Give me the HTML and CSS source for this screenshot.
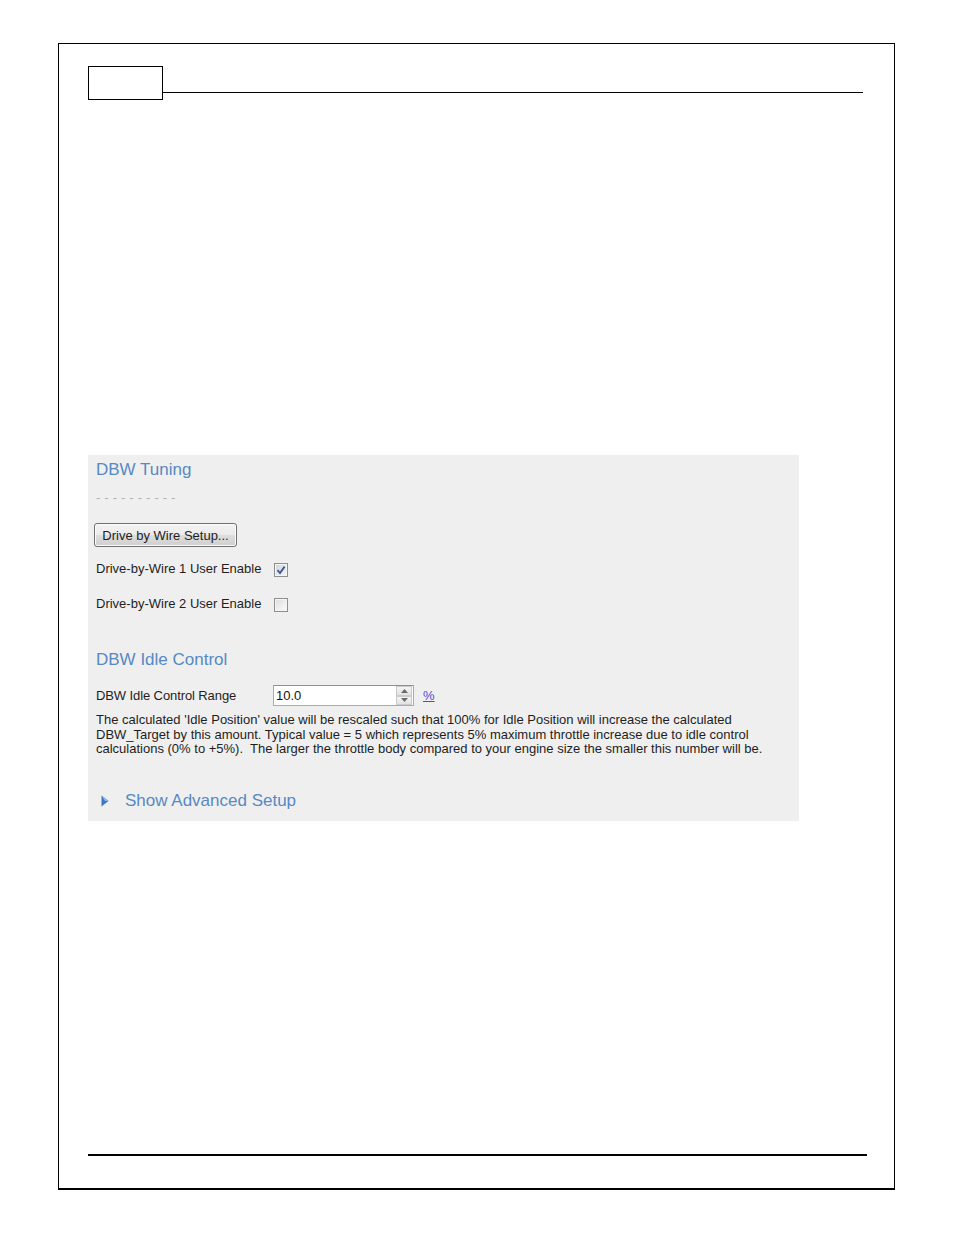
FILE: index.html
```html
<!DOCTYPE html>
<html>
<head>
<meta charset="utf-8">
<link rel="stylesheet" href="styles.css">
</head>
<body>
<div class="page">
  <div class="header">
    <div class="pagebox"></div>
    <div class="headline"></div>
  </div>
  <div class="panel">
    <div class="title">DBW Tuning</div>
    <div class="dashes">- - - - - - - - - -</div>
    <div class="btnrow"><button class="btn">Drive by Wire Setup...</button></div>
    <div class="checkrow first">
      <span class="label">Drive-by-Wire 1 User Enable</span>
      <span class="check checked"><svg viewBox="0 0 10 10" width="10" height="10"><path d="M1.5 5.2 L4 8 L8.6 1.6" fill="none" stroke="#3f5593" stroke-width="1.8"/></svg></span>
    </div>
    <div class="checkrow second">
      <span class="label">Drive-by-Wire 2 User Enable</span>
      <span class="check"></span>
    </div>
    <div class="title title2">DBW Idle Control</div>
    <div class="rangerow">
      <span class="rlabel">DBW Idle Control Range</span>
      <span class="input">
        <span class="value">10.0</span>
        <span class="spin">
          <span class="sbtn"><svg viewBox="0 0 7 4" width="7" height="4"><path d="M0 4 L3.5 0 L7 4Z" fill="#6a6a6a"/></svg></span>
          <span class="sbtn"><svg viewBox="0 0 7 4" width="7" height="4"><path d="M0 0 L3.5 4 L7 0Z" fill="#6a6a6a"/></svg></span>
        </span>
      </span>
      <span class="unit">%</span>
    </div>
    <div class="desc">The calculated 'Idle Position' value will be rescaled such that 100% for Idle Position will increase the calculated<br>DBW_Target by this amount. Typical value = 5 which represents 5% maximum throttle increase due to idle control<br>calculations (0% to +5%).&nbsp; The larger the throttle body compared to your engine size the smaller this number will be.</div>
    <div class="advanced">
      <svg class="tri" viewBox="0 0 8 12" width="8" height="12"><path d="M0.5 0.5 L7.5 6 L0.5 11.5Z" fill="#3d78c4"/><path d="M0.5 0.5 L7.5 6 L4 6Z" fill="#8fb6e6"/></svg>
      <span class="advtext">Show Advanced Setup</span>
    </div>
  </div>
  <div class="footline"></div>
</div>
</body>
</html>
```

FILE: styles.css
```css
html, body {
  margin: 0;
  padding: 0;
  background: #fff;
}
body {
  font-family: "Liberation Sans", Arial, sans-serif;
}
.page {
  margin: 43px 0 0 58px;
  width: 835px;
  height: 1144px;
  border: 1px solid #000;
  border-bottom-width: 2px;
  display: flex;
  flex-direction: column;
}
.header {
  display: flex;
  align-items: flex-start;
  margin: 22px 0 0 29px;
}
.pagebox {
  width: 73px;
  height: 32px;
  border: 1px solid #000;
}
.headline {
  width: 700px;
  height: 1px;
  background: #000;
  margin-top: 26px;
}
.panel {
  margin: 355px 0 0 29px;
  width: 703px;
  height: 361px;
  padding: 5px 0 0 8px;
  background: #efefef;
  display: flex;
  flex-direction: column;
  align-items: flex-start;
}
.title {
  font-size: 17px;
  line-height: 20px;
  height: 20px;
  color: #5789c3;
}
.title2 {
  margin-top: 37px;
}
.dashes {
  margin-top: 8px;
  height: 20px;
  line-height: 20px;
  font-size: 13px;
  letter-spacing: 0.2px;
  color: #b4b4b4;
  white-space: pre;
}
.btnrow {
  margin-top: 15px;
  margin-left: -2px;
}
.btn {
  box-sizing: border-box;
  width: 143px;
  height: 24px;
  padding: 0;
  font-family: "Liberation Sans", Arial, sans-serif;
  font-size: 13px;
  color: #1e1e1e;
  border: 1px solid #707070;
  border-radius: 3px;
  background: linear-gradient(#f3f3f3 0%, #ebebeb 48%, #dddddd 52%, #cfcfcf 100%);
  box-shadow: inset 0 0 0 1px #fbfbfb;
}
.checkrow {
  display: flex;
  align-items: center;
  height: 20px;
  font-size: 13px;
  color: #1e1e1e;
}
.checkrow.first { margin-top: 11px; }
.checkrow.second { margin-top: 15px; }
.label {
  width: 178px;
}
.check {
  box-sizing: border-box;
  width: 14px;
  height: 14px;
  border: 1px solid #8e8f8f;
  background: linear-gradient(135deg, #dcdcdc, #fdfdfd);
  box-shadow: inset 0 0 0 1px #f4f4f4;
  display: flex;
  align-items: center;
  justify-content: center;
  margin-top: 3px;
}
.check.checked {
  background: linear-gradient(135deg, #cfd3dc, #f6f7f9);
}
.rangerow {
  margin-top: 15px;
  display: flex;
  align-items: center;
  height: 21px;
  font-size: 13px;
  color: #1e1e1e;
}
.rlabel {
  width: 177px;
  letter-spacing: -0.1px;
}
.input {
  box-sizing: border-box;
  width: 141px;
  height: 21px;
  border: 1px solid #a9abae;
  border-top-color: #8e9094;
  background: #fff;
  display: flex;
  align-items: center;
  justify-content: space-between;
  padding-left: 2px;
}
.value {
  font-size: 13px;
  color: #111;
}
.spin {
  display: flex;
  flex-direction: column;
  width: 16px;
  height: 19px;
  margin-right: 1px;
}
.sbtn {
  flex: 1;
  display: flex;
  align-items: center;
  justify-content: center;
  border: 1px solid #c9cbce;
  background: linear-gradient(#f5f5f5, #e2e2e2);
  box-sizing: border-box;
}
.unit {
  margin-left: 9px;
  font-size: 13px;
  color: #4b4bd0;
  text-decoration: underline;
}
.desc {
  margin-top: 7px;
  font-size: 13px;
  line-height: 14.5px;
  color: #1e1e1e;
  white-space: nowrap;
}
.advanced {
  margin-top: 34px;
  display: flex;
  align-items: center;
  height: 20px;
  padding-left: 5px;
}
.tri {
  margin-right: 16px;
}
.advtext {
  font-size: 17px;
  color: #5789c3;
}
.footline {
  margin: auto 0 32px 29px;
  width: 779px;
  height: 2px;
  background: #000;
}
```
